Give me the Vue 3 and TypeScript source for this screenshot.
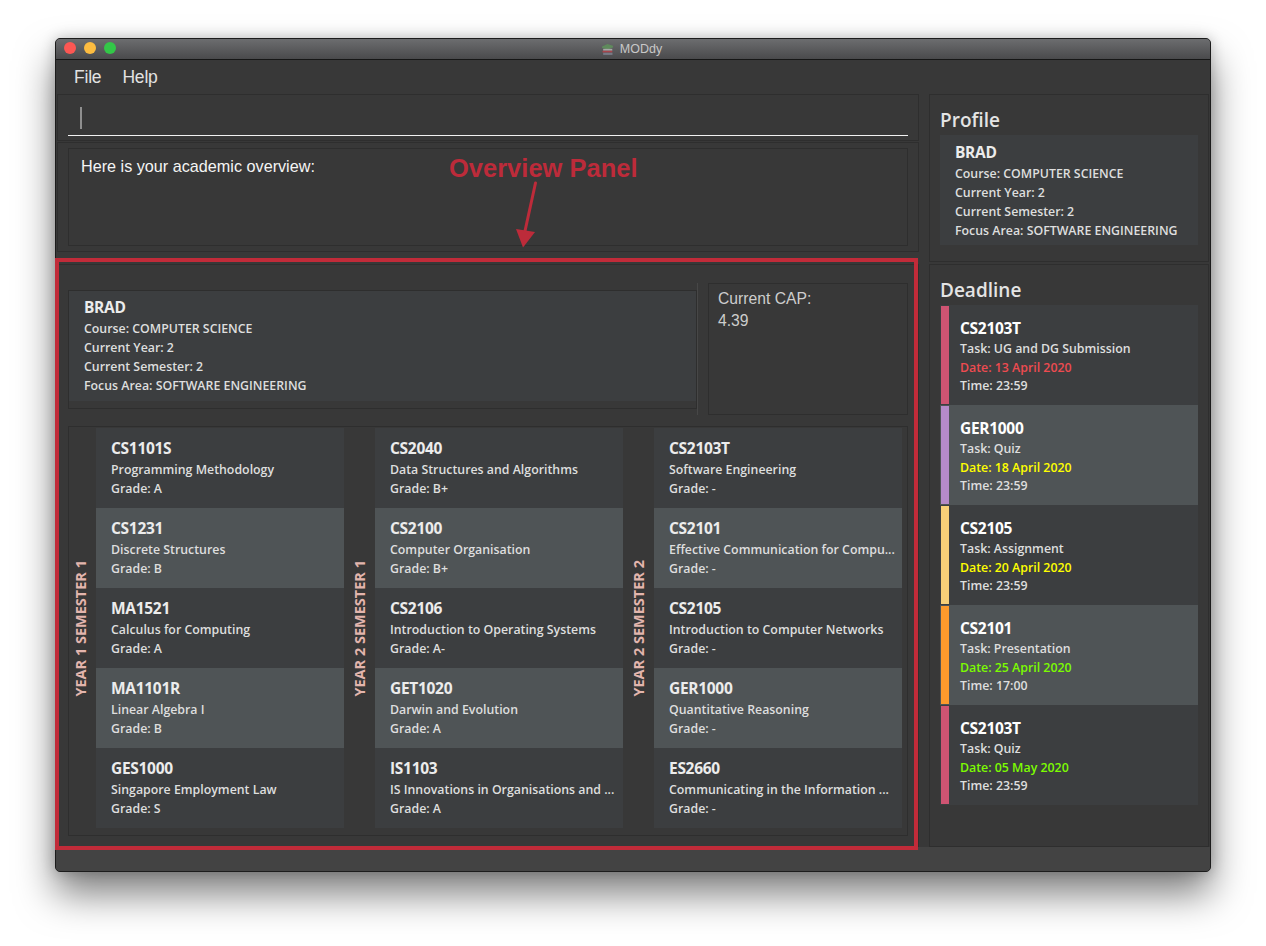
<script setup lang="ts">
interface Mod {
  code: string
  name: string
  grade: string
}
interface Semester {
  label: string
  mods: Mod[]
}
interface Deadline {
  code: string
  task: string
  date: string
  time: string
  bar: string
  tone: string
}

const profileLines = [
  'Course: COMPUTER SCIENCE',
  'Current Year: 2',
  'Current Semester: 2',
  'Focus Area: SOFTWARE ENGINEERING',
]

const semesters: Semester[] = [
  {
    label: 'YEAR 1 SEMESTER 1',
    mods: [
      { code: 'CS1101S', name: 'Programming Methodology', grade: 'A' },
      { code: 'CS1231', name: 'Discrete Structures', grade: 'B' },
      { code: 'MA1521', name: 'Calculus for Computing', grade: 'A' },
      { code: 'MA1101R', name: 'Linear Algebra I', grade: 'B' },
      { code: 'GES1000', name: 'Singapore Employment Law', grade: 'S' },
    ],
  },
  {
    label: 'YEAR 2 SEMESTER 1',
    mods: [
      { code: 'CS2040', name: 'Data Structures and Algorithms', grade: 'B+' },
      { code: 'CS2100', name: 'Computer Organisation', grade: 'B+' },
      { code: 'CS2106', name: 'Introduction to Operating Systems', grade: 'A-' },
      { code: 'GET1020', name: 'Darwin and Evolution', grade: 'A' },
      { code: 'IS1103', name: 'IS Innovations in Organisations and ...', grade: 'A' },
    ],
  },
  {
    label: 'YEAR 2 SEMESTER 2',
    mods: [
      { code: 'CS2103T', name: 'Software Engineering', grade: '-' },
      { code: 'CS2101', name: 'Effective Communication for Compu...', grade: '-' },
      { code: 'CS2105', name: 'Introduction to Computer Networks', grade: '-' },
      { code: 'GER1000', name: 'Quantitative Reasoning', grade: '-' },
      { code: 'ES2660', name: 'Communicating in the Information ...', grade: '-' },
    ],
  },
]

const deadlines: Deadline[] = [
  { code: 'CS2103T', task: 'UG and DG Submission', date: '13 April 2020', time: '23:59', bar: '#cf5472', tone: 'red' },
  { code: 'GER1000', task: 'Quiz', date: '18 April 2020', time: '23:59', bar: '#b58bc9', tone: 'yellow' },
  { code: 'CS2105', task: 'Assignment', date: '20 April 2020', time: '23:59', bar: '#f7cf78', tone: 'yellow' },
  { code: 'CS2101', task: 'Presentation', date: '25 April 2020', time: '17:00', bar: '#fc9a2c', tone: 'green' },
  { code: 'CS2103T', task: 'Quiz', date: '05 May 2020', time: '23:59', bar: '#cf5472', tone: 'green' },
]
</script>

<template>
  <div class="page">
    <div class="window">
      <header class="titlebar">
        <div class="lights">
          <span class="light light--close" />
          <span class="light light--min" />
          <span class="light light--max" />
        </div>
        <div class="app-title">
          <svg class="app-icon" viewBox="0 0 12 12">
            <path d="M1 3.2 6 1l5 1.6v1.6L6 6 1 4.6z" fill="#5f8a5c" />
            <path d="M2 5.4h8.4v1.7H2z" fill="#a8a8a8" />
            <path d="M1.4 7.2h9v1.6h-9z" fill="#a8444c" />
            <path d="M2 9h8.6v2H2z" fill="#777a86" />
          </svg>
          <span>MODdy</span>
        </div>
      </header>

      <nav class="menu">
        <span>File</span>
        <span>Help</span>
      </nav>

      <main class="main">
        <section class="left">
          <div class="panel command">
            <div class="command-field"><span class="caret" /></div>
          </div>
          <div class="panel result">
            <div class="result-box">Here is your academic overview:</div>
          </div>
          <div class="panel overview">
            <div class="overview-top">
              <div class="overview-profile">
                <div class="overview-card">
                  <div class="card-title">BRAD</div>
                  <div v-for="line in profileLines" :key="line" class="row">{{ line }}</div>
                </div>
              </div>
              <div class="cap">
                <div>Current CAP:</div>
                <div class="cap-value">4.39</div>
              </div>
            </div>
            <div class="semesters">
              <div v-for="sem in semesters" :key="sem.label" class="semester">
                <div class="sem-label"><span>{{ sem.label }}</span></div>
                <div class="mods">
                  <div v-for="mod in sem.mods" :key="mod.code" class="mod">
                    <div class="card-title">{{ mod.code }}</div>
                    <div class="row">{{ mod.name }}</div>
                    <div class="row">Grade: {{ mod.grade }}</div>
                  </div>
                </div>
              </div>
            </div>
          </div>
        </section>

        <aside class="right">
          <div class="panel profile">
            <h2 class="heading">Profile</h2>
            <div class="profile-card">
              <div class="card-title">BRAD</div>
              <div v-for="line in profileLines" :key="line" class="row">{{ line }}</div>
            </div>
          </div>
          <div class="panel deadline">
            <h2 class="heading">Deadline</h2>
            <div class="deadline-list">
              <div v-for="item in deadlines" :key="item.code + item.task" class="deadline-card">
                <span class="deadline-bar" :style="{ background: item.bar }" />
                <div class="deadline-body">
                  <div class="card-title card-title--white">{{ item.code }}</div>
                  <div class="row">Task: {{ item.task }}</div>
                  <div class="row" :class="'row--' + item.tone">Date: {{ item.date }}</div>
                  <div class="row">Time: {{ item.time }}</div>
                </div>
              </div>
            </div>
          </div>
        </aside>
      </main>

      <footer class="status" />

      <!-- annotation drawn on top of the screenshot -->
      <div class="red-frame" />
      <div class="note">Overview Panel</div>
      <svg class="note-arrow" viewBox="0 0 30 70">
        <path d="M21.5 2 11 50" fill="none" stroke="#bd2b3a" stroke-width="3" stroke-linecap="round" />
        <path d="M2 48 21 51 9 66.5z" fill="#bd2b3a" />
      </svg>
    </div>
  </div>
</template>

<style scoped>
.page {
  width: 1266px;
  height: 946px;
  padding: 38px 0 0 55px;
  box-sizing: border-box;
  background: #fff;
  overflow: hidden;
}

.window {
  position: relative;
  width: 1156px;
  height: 834px;
  box-sizing: border-box;
  display: flex;
  flex-direction: column;
  background: #383838;
  border: 1px solid #1c1c1c;
  border-radius: 5px;
  box-shadow: 0 22px 38px rgba(0, 0, 0, 0.5), 0 0 14px rgba(0, 0, 0, 0.22);
  font-family: "Open Sans", "Noto Sans", sans-serif;
}

.titlebar {
  position: relative;
  flex: 0 0 20px;
  display: flex;
  align-items: center;
  justify-content: center;
  background: linear-gradient(#6c6d6f, #4a4a4c);
  border-bottom: 1px solid #161616;
  border-radius: 4px 4px 0 0;
}

.lights {
  position: absolute;
  left: 8px;
  top: 3px;
  display: flex;
  gap: 8px;
}

.light {
  width: 12px;
  height: 12px;
  border-radius: 50%;
}

.light--close {
  background: #fc5753;
}

.light--min {
  background: #fdbc40;
}

.light--max {
  background: #33c748;
}

.app-title {
  display: flex;
  align-items: center;
  gap: 6px;
  margin-left: -3px;
  color: #c8c8c8;
  font: 12.5px "Liberation Sans", sans-serif;
}

.app-icon {
  width: 13px;
  height: 13px;
}

.menu {
  flex: 0 0 34px;
  display: flex;
  align-items: center;
  gap: 21px;
  padding-left: 18px;
  box-sizing: border-box;
  color: #e2e2e2;
  font: 17.5px "Liberation Sans", sans-serif;
  letter-spacing: -0.2px;
}

.main {
  flex: 0 0 752px;
  display: flex;
  gap: 10px;
  padding: 0 1px;
}

.panel {
  box-sizing: border-box;
  border: 1px solid #2e2e2e;
}

.left {
  width: 862px;
  display: flex;
  flex-direction: column;
  gap: 1px;
}

.command {
  height: 47px;
  padding: 0 10px 4px;
  display: flex;
}

.command-field {
  flex: 1;
  display: flex;
  align-items: flex-start;
  padding: 12px 0 0 12px;
  border-bottom: 1px solid #f2f2f2;
}

.caret {
  width: 1.5px;
  height: 22px;
  background: #8f8f8f;
}

.result {
  height: 110px;
  padding: 5px 10px;
  margin-bottom: 11px;
  display: flex;
}

.result-box {
  flex: 1;
  padding: 7px 12px;
  border: 1px solid #2e2e2e;
  color: #f4f4f4;
  font: 16.2px/20px "Liberation Sans", sans-serif;
}

.overview {
  flex: 1;
  padding: 18px 10px 10px;
  display: flex;
  flex-direction: column;
  gap: 11px;
}

.overview-top {
  height: 132px;
  display: flex;
  gap: 10px;
}

.overview-profile {
  width: 630px;
  box-sizing: border-box;
  padding: 7px 0 6px;
  border-right: 1px solid #474747;
}

.overview-card {
  height: 100%;
  box-sizing: border-box;
  padding: 5px 15px;
  border: 1px solid #2e2e2e;
  background: linear-gradient(#3c3e40 110px, #383838 110px);
}

.cap {
  flex: 1;
  padding: 4px 9px;
  border: 1px solid #2e2e2e;
  color: #cdcdcd;
  font: 15.7px/22px "Liberation Sans", sans-serif;
}

.semesters {
  flex: 1;
  display: flex;
  gap: 4px;
  padding: 1px 5px 7px 0;
  border: 1px solid #2e2e2e;
}

.semester {
  display: flex;
}

.sem-label {
  width: 27px;
  box-sizing: border-box;
  padding-right: 4px;
  display: flex;
  align-items: center;
  justify-content: center;
}

.sem-label span {
  writing-mode: vertical-rl;
  transform: rotate(180deg);
  white-space: nowrap;
  color: #e3b5ad;
  font-size: 14.5px;
  font-weight: 700;
}

.mods {
  width: 248px;
}

.mod {
  height: 80px;
  box-sizing: border-box;
  padding: 9px 15px 0;
  background: #3c3e40;
}

.mod:nth-child(even) {
  background: #4f5456;
}

.card-title {
  color: #ececec;
  font-size: 15.5px;
  font-weight: 700;
  line-height: 23px;
  letter-spacing: -0.3px;
}

.card-title--white {
  color: #fff;
}

.row {
  color: #dedede;
  font-size: 12.35px;
  font-weight: 600;
  line-height: 19px;
  white-space: nowrap;
}

.row--red {
  color: #ee4b50;
}

.row--yellow {
  color: #ffff00;
}

.row--green {
  color: #7cfc00;
}

.right {
  width: 280px;
  display: flex;
  flex-direction: column;
  gap: 2px;
}

.heading {
  margin: 0;
  color: #e4e4e4;
  font-size: 19px;
  font-weight: 600;
  line-height: 26px;
}

.profile {
  height: 168px;
  padding: 12px 10px 0;
}

.profile-card {
  height: 110px;
  margin-top: 2px;
  box-sizing: border-box;
  padding: 6px 15px;
  background: #3c3e40;
}

.deadline {
  flex: 1;
  padding: 12px 10px 0;
}

.deadline-list {
  margin-top: 2px;
}

.deadline-card {
  height: 100px;
  display: flex;
  background: #3c3e40;
}

.deadline-card:nth-child(even) {
  background: #4f5456;
}

.deadline-bar {
  width: 8px;
  margin: 1px 0 1px 1px;
}

.deadline-body {
  padding: 12px 0 0 11px;
}

.deadline-body .row {
  line-height: 18.5px;
}

.status {
  flex: 1;
  background: #434343;
  border-radius: 0 0 4px 4px;
}

.red-frame {
  position: absolute;
  left: -1px;
  top: 219px;
  width: 863px;
  height: 592px;
  box-sizing: border-box;
  border: 4px solid #c12b39;
}

.note {
  position: absolute;
  left: 393px;
  top: 114px;
  color: #bd2b3a;
  font: 700 25.5px/30px "Liberation Sans", sans-serif;
  white-space: nowrap;
}

.note-arrow {
  position: absolute;
  left: 458px;
  top: 142px;
  width: 30px;
  height: 70px;
}
</style>

<style>
html,
body {
  margin: 0;
  background: #fff;
}
</style>
